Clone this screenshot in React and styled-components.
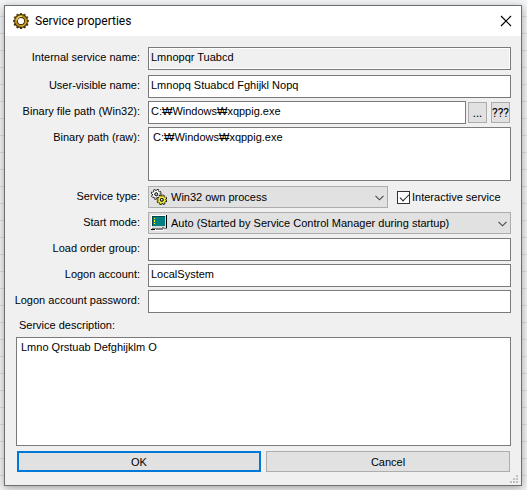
import * as React from "react";
import styled, { createGlobalStyle } from "styled-components";

const GlobalStyle = createGlobalStyle`
  * {
    box-sizing: border-box;
  }

  body {
    margin: 0;
    font-family: "Liberation Sans", Arial, sans-serif;
    font-size: 11px;
    color: #000;
  }
`;

const teeth = [0, 30, 60, 90, 120, 150, 180, 210, 240, 270, 300, 330];

function GearIcon() {
  return (
    <svg width="16" height="16" viewBox="0 0 16 16" aria-hidden="true">
      {teeth.map((a) => (
        <rect
          key={a}
          x="6.9"
          y="0"
          width="2.2"
          height="3"
          fill={a > 90 && a < 270 ? "#3a2c08" : "#6b5618"}
          transform={`rotate(${a} 8 8)`}
        />
      ))}
      <circle cx="8" cy="8" r="5" fill="none" stroke="#3a2c08" strokeWidth="3.8" />
      <circle cx="8" cy="8" r="5" fill="none" stroke="#b98c18" strokeWidth="2.2" />
      <path d="M3.6 7.5A4.5 4.5 0 0 1 9 3.4" fill="none" stroke="#f0d878" strokeWidth="1.2" />
      <path d="M12.9 8.5A4.9 4.9 0 0 1 8 13" fill="none" stroke="#e3b92c" strokeWidth="1" />
    </svg>
  );
}

function SmallGear({ x, y, fill }) {
  return (
    <g transform={`translate(${x} ${y})`} fill="none">
      <circle r="4.4" stroke="#000" strokeWidth="1.9" strokeDasharray="2 1.45" />
      <circle r="3.1" stroke="#000" strokeWidth="2.6" />
      <circle r="4" stroke={fill} strokeWidth="1.1" strokeDasharray="1.6 1.54" />
      <circle r="2.7" stroke={fill} strokeWidth="1.6" />
      <circle r="1.4" stroke="#000" strokeWidth="1" />
    </g>
  );
}

function GearsIcon() {
  return (
    <svg width="16" height="16" viewBox="0 0 16 16" aria-hidden="true">
      <SmallGear x={5.3} y={5.3} fill="#fff" />
      <SmallGear x={10.8} y={10.8} fill="#f4ee3c" />
    </svg>
  );
}

function MonitorIcon() {
  return (
    <svg width="16" height="16" viewBox="0 0 16 16" shapeRendering="crispEdges" aria-hidden="true">
      <path d="M15 0h1v14h-1z" fill="#000" />
      <path d="M1 13h15v1H1z" fill="#808080" />
      <path d="M0 0h15v13H0z" fill="#d8d8d8" />
      <path d="M0 0h15v1H1v12H0z" fill="#fff" />
      <path d="M1 1h13v10H1z" fill="#004848" />
      <path d="M2 2h12v9H2z" fill="#008080" />
      <path d="M3 3h1v1H3zM3 5h1v2H3zM3 8h1v1H3z" fill="#ff0" />
      <path d="M11 12h2v1h-2z" fill="#808080" />
      <path d="M0 14h4v1H0z" fill="#000" />
      <path d="M4 14h9v2H4z" fill="#fff" />
      <path d="M5 14h7v1H5z" fill="#808080" />
    </svg>
  );
}

function Chevron() {
  return (
    <svg width="9" height="6" viewBox="0 0 9 6" aria-hidden="true">
      <path d="M0.5 0.8L4.5 4.8L8.5 0.8" fill="none" stroke="#444" strokeWidth="1.1" />
    </svg>
  );
}

function CloseIcon() {
  return (
    <svg width="12" height="12" viewBox="0 0 12 12" aria-hidden="true">
      <path d="M1 1L11 11M11 1L1 11" stroke="#000" strokeWidth="1.2" />
    </svg>
  );
}

function Grip() {
  return (
    <svg width="8" height="8" viewBox="0 0 8 8" shapeRendering="crispEdges" aria-hidden="true">
      <path d="M6 0h2v2H6zM3 3h2v2H3zM6 3h2v2H6zM0 6h2v2H0zM3 6h2v2H3zM6 6h2v2H6z" fill="#bfbfbf" />
    </svg>
  );
}

function Dropdown({ id, icon, value }) {
  return (
    <SelectBox>
      <Select id={id} defaultValue={value}>
        <option>{value}</option>
      </Select>
      <SelectIcon>{icon}</SelectIcon>
      <SelectArrow>
        <Chevron />
      </SelectArrow>
    </SelectBox>
  );
}

function App() {
  return (
    <Desktop>
      <GlobalStyle />
      <Dialog role="dialog" aria-labelledby="title">
        <TitleBar>
          <GearIcon />
          <Title id="title">Service properties</Title>
          <CloseButton type="button" aria-label="Close">
            <CloseIcon />
          </CloseButton>
        </TitleBar>
        <Form onSubmit={(e) => e.preventDefault()}>
          <Fields>
            <Label htmlFor="internal">Internal service name:</Label>
            <Input id="internal" readOnly defaultValue="Lmnopqr Tuabcd" />
          </Fields>
          <Fields>
            <Label htmlFor="visible">User-visible name:</Label>
            <Input id="visible" defaultValue="Lmnopq Stuabcd Fghijkl Nopq" />

            <Label htmlFor="binary">Binary file path (Win32):</Label>
            <PathRow>
              <Input id="binary" defaultValue="C:₩Windows₩xqppig.exe" />
              <PathButtons>
                <SmallButton type="button">...</SmallButton>
                <SmallButton type="button">???</SmallButton>
              </PathButtons>
            </PathRow>

            <Label htmlFor="raw">Binary path (raw):</Label>
            <RawPath id="raw" defaultValue="C:₩Windows₩xqppig.exe" />
          </Fields>
          <Fields>
            <Label htmlFor="type">Service type:</Label>
            <TypeRow>
              <Dropdown id="type" icon={<GearsIcon />} value="Win32 own process" />
              <CheckLabel>
                <Checkbox type="checkbox" defaultChecked />
                Interactive service
              </CheckLabel>
            </TypeRow>

            <Label htmlFor="mode">Start mode:</Label>
            <Dropdown
              id="mode"
              icon={<MonitorIcon />}
              value="Auto (Started by Service Control Manager during startup)"
            />

            <Label htmlFor="group">Load order group:</Label>
            <Input id="group" />

            <Label htmlFor="account">Logon account:</Label>
            <Input id="account" defaultValue="LocalSystem" />

            <Label htmlFor="password">Logon account password:</Label>
            <Input id="password" type="password" />
          </Fields>
          <DescriptionLabel htmlFor="description">Service description:</DescriptionLabel>
          <Description id="description" defaultValue="Lmno Qrstuab Defghijklm O" />
          <Actions>
            <ActionButton type="submit" $primary>
              OK
            </ActionButton>
            <ActionButton type="button">Cancel</ActionButton>
          </Actions>
        </Form>
        <GripCorner>
          <Grip />
        </GripCorner>
      </Dialog>
    </Desktop>
  );
}

const Desktop = styled.div`
  display: flex;
  min-height: 100vh;
  padding: 5px 5px 4px 4px;
  background: repeating-linear-gradient(#f3f4f5 0 16px, #dcdddf 16px 17px);
`;

const Dialog = styled.div`
  position: relative;
  display: flex;
  flex: 1;
  flex-direction: column;
  min-width: 0;
  border: 1px solid #6f6f6f;
  background: #f0f0f0;
  box-shadow: 0 2px 8px rgba(0, 0, 0, 0.35);
`;

const TitleBar = styled.header`
  display: flex;
  align-items: center;
  gap: 6px;
  height: 30px;
  padding: 0 9px 0 8px;
  background: #fff;
`;

const Title = styled.h1`
  flex: 1;
  margin: 0;
  font-family: Roboto, sans-serif;
  font-size: 12px;
  font-weight: 400;
`;

const CloseButton = styled.button`
  display: flex;
  padding: 0;
  border: 0;
  background: none;
`;

const Form = styled.form`
  display: flex;
  flex: 1;
  flex-direction: column;
  gap: 5px;
  padding: 11px 10px 13px 11px;
`;

const Fields = styled.div`
  display: grid;
  grid-template-columns: 124px minmax(0, 1fr);
  column-gap: 8px;
  row-gap: 3px;
`;

const Label = styled.label`
  padding-top: 3px;
  line-height: 14px;
  text-align: right;
  white-space: nowrap;
  justify-self: end;
`;

const Input = styled.input`
  width: 100%;
  min-width: 0;
  height: 23px;
  padding: 0 2px 3px;
  border: 1px solid #7a7a7a;
  border-radius: 0;
  background: #fff;
  font: inherit;
  color: inherit;
  outline: none;

  &:read-only {
    background: #f0f0f0;
    box-shadow: inset 0 0 0 1px #fff;
  }
`;

const PathRow = styled.div`
  display: flex;
  align-items: center;
  gap: 2px;
  padding-right: 1px;
`;

const PathButtons = styled.div`
  display: flex;
  gap: 4px;
`;

const Button = styled.button`
  padding: 0;
  border: 1px solid #adadad;
  border-radius: 0;
  background: #e1e1e1;
  font: inherit;
  color: inherit;
`;

const SmallButton = styled(Button)`
  width: 19px;
  height: 21px;
  font-family: Roboto, sans-serif;
  font-size: 12px;
`;

const RawPath = styled.textarea`
  display: block;
  width: 100%;
  height: 54px;
  padding: 2px 4px;
  border: 1px solid #7a7a7a;
  border-radius: 0;
  background: #fff;
  font: inherit;
  line-height: 14px;
  color: inherit;
  outline: none;
  resize: none;
`;

const SelectBox = styled.div`
  position: relative;
  flex: 1;
  height: 23px;
`;

const Select = styled.select`
  width: 100%;
  height: 22px;
  padding: 0 24px 0 22px;
  border: 1px solid #adadad;
  border-radius: 0;
  background: #e1e1e1;
  font: inherit;
  color: inherit;
  appearance: none;
`;

// icon and arrow lie over the native select
const SelectIcon = styled.span`
  position: absolute;
  top: 3px;
  left: 3px;
  display: flex;
  pointer-events: none;
`;

const SelectArrow = styled.span`
  position: absolute;
  top: 9px;
  right: 4px;
  display: flex;
  pointer-events: none;
`;

const TypeRow = styled.div`
  display: flex;
  gap: 9px;
`;

const CheckLabel = styled.label`
  display: flex;
  align-items: center;
  gap: 2px;
  width: 114px;
  height: 22px;
  white-space: nowrap;
`;

const Checkbox = styled.input`
  flex: none;
  width: 13px;
  height: 13px;
  margin: 0;
  border: 1px solid #333;
  background: #fff;
  appearance: none;

  &:checked::before {
    content: "";
    display: block;
    width: 8px;
    height: 4px;
    margin: 2px 0 0 2px;
    border: solid #222;
    border-width: 0 0 1px 1px;
    transform: rotate(-45deg);
  }
`;

const DescriptionLabel = styled.label`
  padding: 1px 3px 0;
  line-height: 13px;
`;

const Description = styled(RawPath)`
  flex: 1;
  height: auto;
  min-height: 60px;
`;

const Actions = styled.div`
  display: grid;
  grid-template-columns: 1fr 1fr;
  gap: 5px;
  padding: 0 1px;
`;

const ActionButton = styled(Button)`
  height: 21px;
  border: ${(props) => (props.$primary ? "2px solid #0078d7" : "1px solid #adadad")};
`;

const GripCorner = styled.span`
  position: absolute;
  right: 3px;
  bottom: 2px;
  display: flex;
`;

export default App;
